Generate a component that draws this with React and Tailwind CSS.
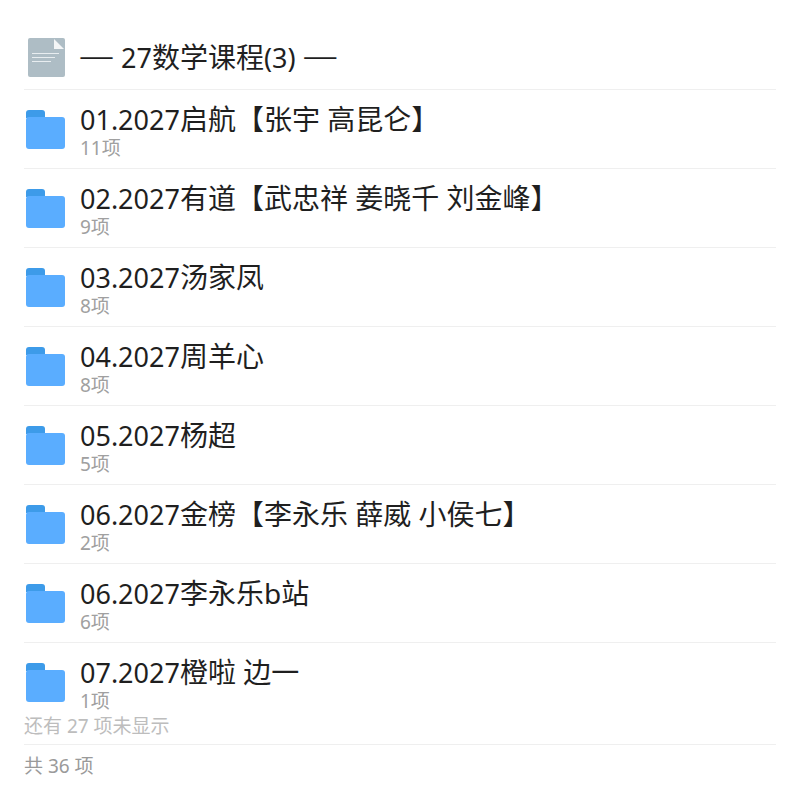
const rows = [
  ["01.2027", "启航【张宇 高昆仑】", "11项"],
  ["02.2027", "有道【武忠祥 姜晓千 刘金峰】", "9项"],
  ["03.2027", "汤家凤", "8项"],
  ["04.2027", "周羊心", "8项"],
  ["05.2027", "杨超", "5项"],
  ["06.2027", "金榜【李永乐 薛威 小侯七】", "2项"],
  ["06.2027", "李永乐b站", "6项"],
  ["07.2027", "橙啦 边一", "1项"],
];

const font = { fontFamily: '"Noto Sans", "Noto Sans CJK SC", sans-serif' };

function FolderIcon() {
  return (
    <svg width="40" height="40" viewBox="0 0 40 40" className="shrink-0 block">
      <path d="M0 3a3 3 0 0 1 3-3h13a3 3 0 0 1 3 3v5H0z" fill="#3d9be9" />
      <rect x="0" y="7" width="39" height="32" rx="3" fill="#5aadff" />
    </svg>
  );
}

function FileIcon() {
  return (
    <svg width="37" height="39" viewBox="0 0 37 39" className="shrink-0 block -mt-[1px]">
      <path d="M2 0h33a2 2 0 0 1 2 2v35a2 2 0 0 1-2 2H2a2 2 0 0 1-2-2V2a2 2 0 0 1 2-2z" fill="#aebdc5" />
      <path d="M26 1l10 10H26z" fill="#f4f6f7" />
      <path d="M4 15.5h27M4 19.5h23M4 23.5h19" stroke="#e8edf0" strokeWidth="1" />
    </svg>
  );
}

export default function App() {
  return (
    <div className="w-[800px] h-[800px] bg-white px-6 pt-[38px] text-[#1f1f1f]" style={font}>
      <div className="flex items-center h-[52px] pb-[11px] pl-1 gap-[14px] border-b border-[#efefef]">
        <FileIcon />
        <div className="text-[28px] leading-[40px] whitespace-nowrap -mt-[3px]">
          <span className="text-[35px] leading-[40px] font-light">—</span>
          <span className="text-[27px]"> 27</span>数学课程<span className="text-[27px]">(3) </span>
          <span className="text-[35px] leading-[40px] font-light">—</span>
        </div>
      </div>
      {rows.map(([n, t, s], i) => (
        <div
          key={i}
          className={"flex h-[79px] pl-[2px] gap-[14px] " + (i < 7 ? "border-b border-[#efefef]" : "")}
        >
          <div className="pt-[20px]"><FolderIcon /></div>
          <div className="pt-[11px]">
            <div className="text-[28px] leading-[36px] whitespace-nowrap"><span className="text-[27px]">{n}</span>{t}</div>
            <div className="text-[19px] leading-[24px] text-[#a0a0a0] whitespace-nowrap -mt-[2px]">{s}</div>
          </div>
        </div>
      ))}
      <div className="text-[19px] leading-[24px] text-[#bdbdbd] -mt-[8px] pb-[6px] border-b border-[#efefef]">还有 27 项未显示</div>
      <div className="text-[19px] leading-[24px] text-[#9a9a9a] mt-[9px]">共 36 项</div>
    </div>
  );
}
